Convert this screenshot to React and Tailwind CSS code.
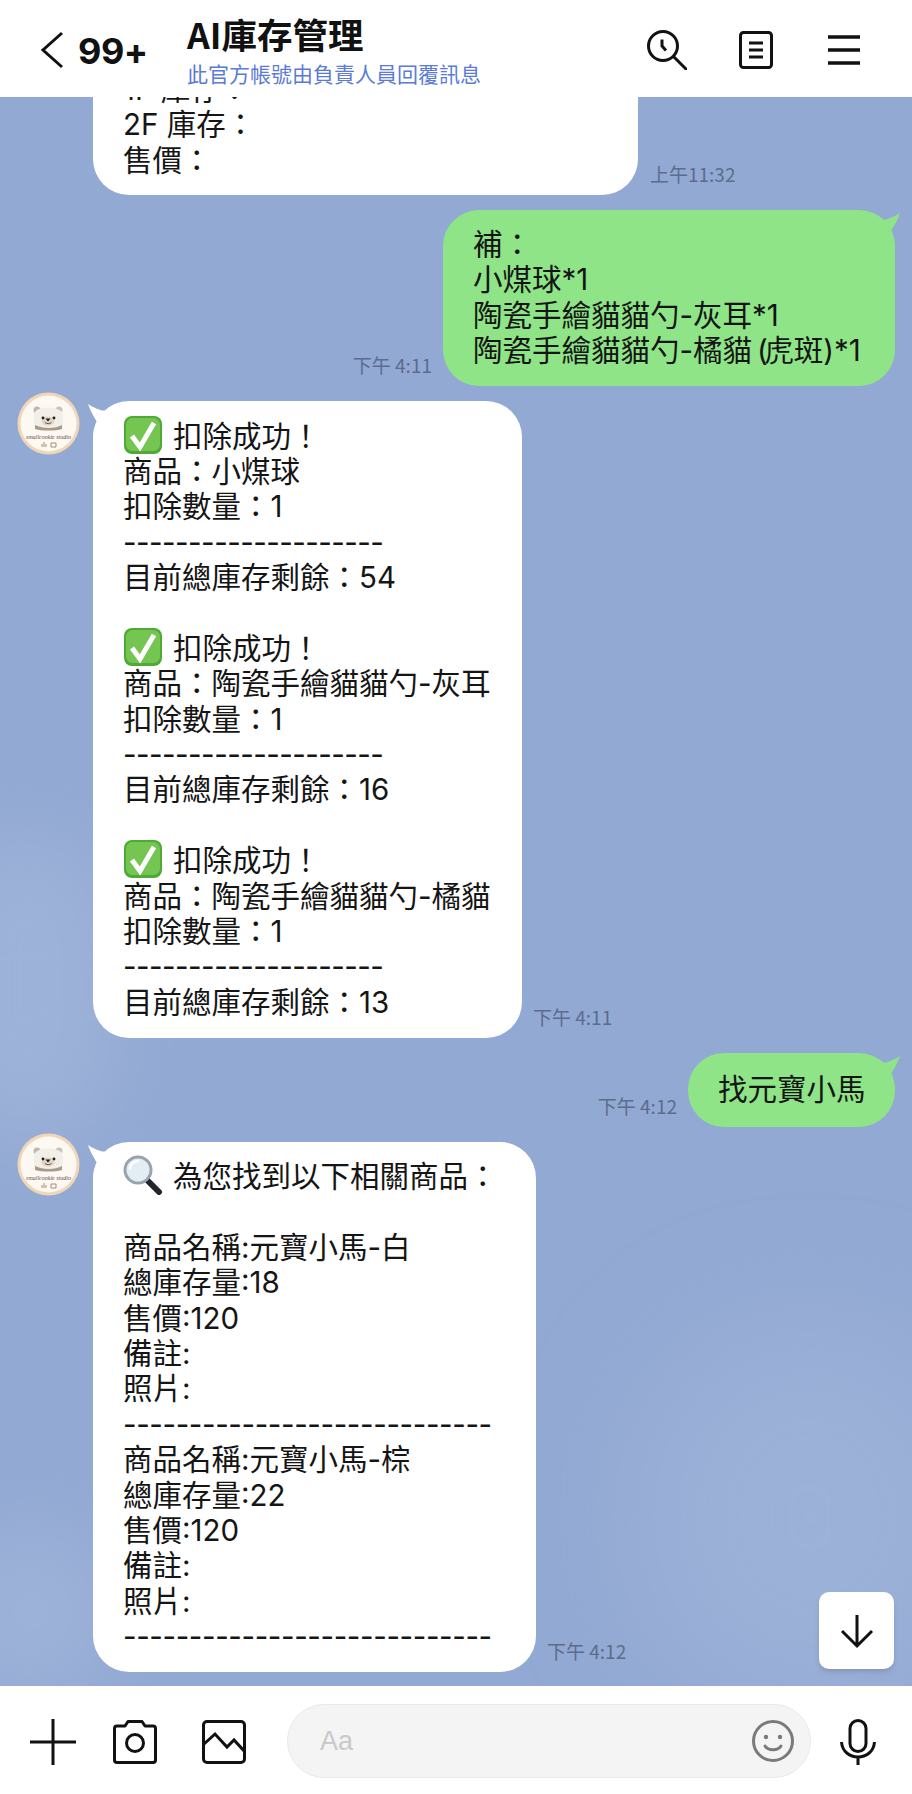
import React from "react";

const dash20 = <span className="tracking-[-0.55px]">{"-".repeat(20)}</span>;
const dash28 = <span className="tracking-[-0.4px]">{"-".repeat(28)}</span>;

function Tail({ color, className }) {
  return (
    <svg viewBox="0 0 45 40" className={`absolute top-0 w-[45px] h-[40px] ${className}`}>
      <path d="M0 3C8 8 15 11 21 9L45 40L5 40C5 33 6 26 9 21C6 16 2 9 0 3Z" fill={color} />
    </svg>
  );
}

function CheckEmoji() {
  return (
    <svg viewBox="0 0 40 40" className="inline-block w-[40px] h-[40px] -my-[8px] mr-[10px] align-[0px]">
      <rect x="1" y="1" width="38" height="38" rx="8" fill="#4fa936" />
      <rect x="3" y="3" width="34" height="33" rx="6.5" fill="#74c552" />
      <path d="M9 21L17 32L31 8" fill="none" stroke="#fff" strokeWidth="5" strokeLinejoin="miter" />
    </svg>
  );
}

function SearchEmoji() {
  return (
    <svg viewBox="0 0 40 40" className="inline-block w-[40px] h-[40px] -my-[8px] mr-[10px] align-[0px]">
      <path d="M24 25L36 37" stroke="#23232b" strokeWidth="6" strokeLinecap="round" />
      <circle cx="15" cy="15" r="13" fill="#e3edf4" stroke="#9aa3ad" strokeWidth="3" />
      <path d="M7 13a8.5 8.5 0 0 1 8-7" fill="none" stroke="#fff" strokeWidth="2.5" strokeLinecap="round" />
    </svg>
  );
}

function Avatar() {
  return (
    <svg viewBox="0 0 63 63" className="w-[63px] h-[63px] shrink-0 -mt-[9px]">
      <circle cx="31.5" cy="31.5" r="31" fill="#f0d6b6" />
      <circle cx="31.5" cy="31.5" r="28" fill="#fdf8f2" />
      <circle cx="20" cy="18" r="3.5" fill="#bdb8ae" />
      <circle cx="42" cy="18" r="3.5" fill="#c8c3b8" />
      <path d="M18 20C22 14 40 14 45 20C47 26 46 32 45 36C38 38 25 38 18 36C17 31 16 26 18 20Z" fill="#f2efe8" />
      <path d="M18 33C26 37 38 37 45 33L45 37C38 39 25 39 18 37Z" fill="#a89a88" />
      <ellipse cx="31" cy="29" rx="6.5" ry="4.5" fill="#ddd5c8" />
      <circle cx="26" cy="26" r="1.4" fill="#231c18" />
      <circle cx="37" cy="26" r="1.4" fill="#231c18" />
      <path d="M28.5 26.5h5l-2.5 3Z" fill="#231c18" />
      <path d="M28 30.5c2 1.5 4.5 1.5 6.5 0" fill="none" stroke="#8a4a38" strokeWidth="1" />
      <text x="31.5" y="47" textAnchor="middle" fontSize="6" fontStyle="italic" fill="#5f4f3f" fontFamily="Liberation Serif, serif">smallcookie studio</text>
      <path d="M25 55v-3M27 55v-5M29 55v-3M34 51h5v4h-5Z" fill="none" stroke="#9a8468" strokeWidth="0.9" />
    </svg>
  );
}

function Time({ text }) {
  return <div className="self-end shrink-0 mb-[9px] text-[19px] leading-[24px] text-[#5c6c8c]">{text}</div>;
}

function Lines({ lines }) {
  return lines.map((l, i) =>
    l === "" ? <div key={i} className="h-[35.4px]" /> : <div key={i} className="h-[35.4px] whitespace-nowrap">{l}</div>
  );
}

const bubbleText = "text-[29.5px] leading-[35.4px] text-[#151515] font-['Inter','Noto_Sans_CJK_TC',sans-serif]";

function LeftMsg({ lines, time, width, extra }) {
  return (
    <div className="flex gap-[13px] pl-[17px]">
      <Avatar />
      <div className={`relative bg-white rounded-[36px] pl-[30px] ${bubbleText} ${extra} ${width}`}>
        <Tail color="#ffffff" className="-left-[5px]" />
        <div className="relative"><Lines lines={lines} /></div>
      </div>
      <div className="-ml-[2px] flex"><Time text={time} /></div>
    </div>
  );
}

function RightMsg({ lines, time, width, extra }) {
  return (
    <div className="flex justify-end gap-[11px] pr-[17px]">
      <Time text={time} />
      <div className={`relative bg-[#8ee486] rounded-[36px] pl-[30px] ${bubbleText} ${extra} ${width}`}>
        <Tail color="#8ee486" className="-right-[5px] -scale-x-100" />
        <div className="relative"><Lines lines={lines} /></div>
      </div>
    </div>
  );
}

export default function App() {
  return (
    <div className="w-[912px] h-[1794px] flex flex-col bg-white overflow-hidden font-['Noto_Sans_CJK_TC','Noto_Sans',sans-serif]">
      {/* header */}
      <div className="h-[97px] shrink-0 flex items-center pt-[3px] bg-white relative z-10">
        <svg viewBox="0 0 24 38" className="w-[24px] h-[38px] ml-[40px]">
          <path d="M22 2L3 19L22 36" fill="none" stroke="#111" strokeWidth="3" />
        </svg>
        <div className="ml-[14px] w-[109px] mt-[2px] font-['Inter',sans-serif] font-bold text-[36px] leading-none text-[#111] tracking-[-0.5px]">99+</div>
        <div className="flex-1 self-start pt-[11px]">
          <div className="font-bold text-[35.5px] leading-[40px] text-[#111]">AI庫存管理</div>
          <div className="text-[21px] leading-[26px] text-[#5b7bd6] mt-[6px]">此官方帳號由負責人員回覆訊息</div>
        </div>
        <svg viewBox="0 0 40 40" className="w-[40px] h-[40px] mr-[52px]">
          <circle cx="16" cy="16" r="14.5" fill="none" stroke="#111" strokeWidth="3" />
          <path d="M15 9.5V16L19 20.5" fill="none" stroke="#111" strokeWidth="3" />
          <path d="M27 27L39 39" fill="none" stroke="#111" strokeWidth="3" strokeLinecap="round" />
        </svg>
        <svg viewBox="0 0 34 38" className="w-[34px] h-[38px] mr-[55px]">
          <rect x="1.5" y="1.5" width="31" height="35" rx="3" fill="none" stroke="#111" strokeWidth="3" />
          <path d="M10 12H24M10 19H24M10 26H24" stroke="#111" strokeWidth="3" />
        </svg>
        <svg viewBox="0 0 32 30" className="w-[32px] h-[30px] mr-[52px]">
          <path d="M0 2H32M0 15H32M0 28H32" stroke="#111" strokeWidth="3.4" />
        </svg>
      </div>

      {/* chat */}
      <div className="relative flex-1 min-h-0 overflow-hidden bg-[#92a9d3]">
        <div className="absolute -left-[60px] top-[740px] w-[170px] h-[300px] rounded-full bg-[#a3b7db] blur-2xl opacity-70" />
        <div className="absolute -left-[50px] top-[1430px] w-[160px] h-[170px] rounded-full bg-[#a3b7db] blur-2xl opacity-70" />
        <div className="absolute left-[640px] top-[1230px] w-[340px] h-[380px] rounded-full bg-[#a3b7db] blur-3xl opacity-60" />

        <div className="relative h-full flex flex-col justify-end gap-[15px] pb-[14px]">
          <div className="flex gap-[12px] pl-[93px]">
            <div className={`bg-white rounded-[36px] w-[545px] pl-[30px] py-[17px] ${bubbleText}`}>
              <Lines lines={["1F 庫存：", "2F 庫存：", "售價："]} />
            </div>
            <Time text="上午11:32" />
          </div>

          <RightMsg
            width="w-[452px]"
            extra="py-[17px]"
            time="下午 4:11"
            lines={[
              "補：",
              "小煤球*1",
              "陶瓷手繪貓貓勺-灰耳*1",
              <>陶瓷手繪貓貓勺-橘貓<span className="tracking-[-3.5px]"> (</span>虎斑)*1</>,
            ]}
          />

          <LeftMsg
            width="w-[429px]"
            extra="py-[18px]"
            time="下午 4:11"
            lines={[
              <><CheckEmoji />扣除成功！</>,
              "商品：小煤球",
              "扣除數量：1",
              dash20,
              "目前總庫存剩餘：54",
              "",
              <><CheckEmoji />扣除成功！</>,
              "商品：陶瓷手繪貓貓勺-灰耳",
              "扣除數量：1",
              dash20,
              "目前總庫存剩餘：16",
              "",
              <><CheckEmoji />扣除成功！</>,
              "商品：陶瓷手繪貓貓勺-橘貓",
              "扣除數量：1",
              dash20,
              "目前總庫存剩餘：13",
            ]}
          />

          <RightMsg width="w-[207px]" extra="py-[19px]" time="下午 4:12" lines={["找元寶小馬"]} />

          <LeftMsg
            width="w-[443px]"
            extra="py-[17.5px]"
            time="下午 4:12"
            lines={[
              <><SearchEmoji />為您找到以下相關商品：</>,
              "",
              "商品名稱:元寶小馬-白",
              "總庫存量:18",
              "售價:120",
              "備註:",
              "照片:",
              dash28,
              "商品名稱:元寶小馬-棕",
              "總庫存量:22",
              "售價:120",
              "備註:",
              "照片:",
              dash28,
            ]}
          />
        </div>

        {/* scroll to bottom */}
        <div className="absolute left-[819px] top-[1495px] w-[75px] h-[77px] bg-white rounded-[10px] shadow-md flex items-center justify-center">
          <svg viewBox="0 0 36 36" className="w-[36px] h-[36px]">
            <path d="M18 2V33M3 18L18 33L33 18" fill="none" stroke="#111" strokeWidth="3" />
          </svg>
        </div>
      </div>

      {/* input bar */}
      <div className="h-[108px] shrink-0 flex items-center pt-[3px] bg-white">
        <svg viewBox="0 0 46 46" className="w-[46px] h-[46px] ml-[30px]">
          <path d="M23 0V46M0 23H46" stroke="#111" strokeWidth="3" />
        </svg>
        <svg viewBox="0 0 44 44" className="w-[44px] h-[44px] ml-[37px]">
          <path d="M4 6H12L15 1.5H29L32 6H40Q42.5 6 42.5 8.5V40Q42.5 42.5 40 42.5H4Q1.5 42.5 1.5 40V8.5Q1.5 6 4 6Z" fill="none" stroke="#111" strokeWidth="3" strokeLinejoin="round" />
          <circle cx="22" cy="23" r="8.5" fill="none" stroke="#111" strokeWidth="3" />
        </svg>
        <svg viewBox="0 0 44 44" className="w-[44px] h-[44px] ml-[45px]">
          <rect x="1.5" y="1.5" width="41" height="41" rx="3.5" fill="none" stroke="#111" strokeWidth="3" />
          <path d="M2 24L13 14L25 27L32 20L43 32" fill="none" stroke="#111" strokeWidth="3" />
        </svg>
        <div className="ml-[41px] w-[524px] h-[74px] -mt-[1px] rounded-full bg-[#f4f4f4] border border-[#e9e9e9] flex items-center justify-between pl-[32px] pr-[16px]">
          <span className="font-['Liberation_Sans',sans-serif] text-[27px] text-[#c9c9c9]">Aa</span>
          <svg viewBox="0 0 42 42" className="w-[42px] h-[42px]">
            <circle cx="21" cy="21" r="19.5" fill="none" stroke="#7a7a7a" strokeWidth="3" />
            <circle cx="14" cy="17" r="2.2" fill="#7a7a7a" />
            <circle cx="28" cy="17" r="2.2" fill="#7a7a7a" />
            <path d="M13 26C16 31 26 31 29 26" fill="none" stroke="#7a7a7a" strokeWidth="3" strokeLinecap="round" />
          </svg>
        </div>
        <svg viewBox="0 0 36 46" className="w-[36px] h-[46px] ml-[29px]">
          <rect x="10" y="1.5" width="16" height="31" rx="8" fill="none" stroke="#111" strokeWidth="3" />
          <path d="M1.5 23C3 43 33 43 34.5 23M18 38V46" fill="none" stroke="#111" strokeWidth="3" />
        </svg>
      </div>
    </div>
  );
}
